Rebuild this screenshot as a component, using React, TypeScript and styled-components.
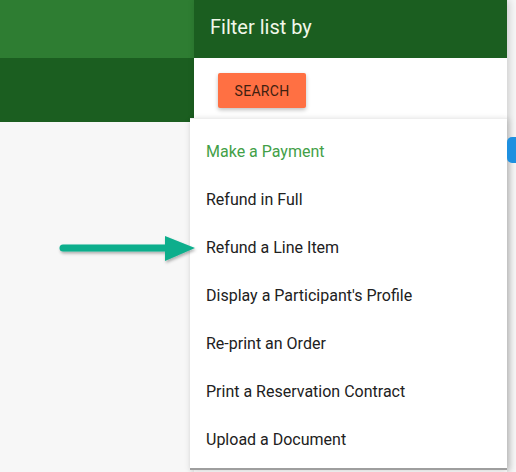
import React from 'react';
import styled, { createGlobalStyle } from 'styled-components';

const GlobalStyle = createGlobalStyle`
  html, body {
    margin: 0;
    padding: 0;
    background: #f7f7f7;
    font-family: Roboto, "Liberation Sans", sans-serif;
  }
`;

const Page = styled.div`
  position: relative;
  width: 516px;
  height: 472px;
  overflow: hidden;
  display: grid;
  grid-template-columns: 194px 313px 9px;
  background: #f7f7f7;
`;

const LeftColumn = styled.div`
  display: flex;
  flex-direction: column;
`;

const Band = styled.div<{ $h: number; $bg: string }>`
  height: ${(p) => p.$h}px;
  background: ${(p) => p.$bg};
`;

const Drawer = styled.div`
  display: flex;
  flex-direction: column;
  background: #fff;
  box-shadow: 2px 0 8px rgba(0, 0, 0, 0.18);
  z-index: 1;
`;

const DrawerHeader = styled.div`
  height: 58px;
  background: #1b5e20;
  display: flex;
  align-items: center;
  padding: 0 16px 4px;
  color: #f1f8e9;
  font-size: 20px;
  box-sizing: border-box;
`;

const Actions = styled.div`
  padding: 15px 24px;
`;

const SearchButton = styled.button`
  width: 88px;
  height: 35px;
  border: none;
  border-radius: 2px;
  background: #ff7043;
  color: #3e2010;
  font-family: Roboto, "Liberation Sans", sans-serif;
  font-size: 14px;
  font-weight: 400;
  letter-spacing: 0.3px;
  box-shadow: 0 2px 4px rgba(0, 0, 0, 0.25);
  cursor: pointer;
`;

const Menu = styled.ul`
  position: absolute;
  left: 190px;
  top: 118px;
  width: 317px;
  height: 352px;
  margin: 0;
  padding: 8px 0 0;
  list-style: none;
  background: #fff;
  border-top: 1px solid #eeeeee;
  border-bottom: 2px solid #9e9e9e;
  box-sizing: border-box;
  box-shadow: 0 2px 6px rgba(0, 0, 0, 0.12), 4px 0 6px rgba(0, 0, 0, 0.06);
  z-index: 2;
`;

const MenuItem = styled.li<{ $active?: boolean }>`
  height: 48px;
  display: flex;
  align-items: center;
  padding: 0 16px;
  font-size: 16px;
  color: ${(p) => (p.$active ? '#43a047' : '#212121')};
`;

const BlueTab = styled.div`
  position: absolute;
  left: 507px;
  top: 137px;
  width: 20px;
  height: 26px;
  border-radius: 5px;
  background: #1e90e0;
  z-index: 3;
`;

const Arrow = styled.svg`
  position: absolute;
  left: 56px;
  top: 232px;
  z-index: 3;
  overflow: visible;
`;

const items = [
  'Make a Payment',
  'Refund in Full',
  'Refund a Line Item',
  "Display a Participant's Profile",
  'Re-print an Order',
  'Print a Reservation Contract',
  'Upload a Document',
];

export default function App() {
  return (
    <>
      <GlobalStyle />
      <Page>
        <LeftColumn>
          <Band $h={58} $bg="#2e7d32" />
          <Band $h={64} $bg="#1b5e20" />
        </LeftColumn>
        <Drawer>
          <DrawerHeader>Filter list by</DrawerHeader>
          <Actions>
            <SearchButton>SEARCH</SearchButton>
          </Actions>
        </Drawer>
        <div />
        <Menu>
          {items.map((item, i) => (
            <MenuItem key={item} $active={i === 0}>
              {item}
            </MenuItem>
          ))}
        </Menu>
        <BlueTab />
        <Arrow width="140" height="34" viewBox="0 0 140 34">
          <defs>
            <filter id="arrowShadow" x="-10%" y="-30%" width="120%" height="180%">
              <feDropShadow dx="1" dy="2" stdDeviation="1.5" floodColor="#000" floodOpacity="0.3" />
            </filter>
          </defs>
          <g filter="url(#arrowShadow)">
            <line x1="7" y1="16" x2="112" y2="16" stroke="#0bae8c" strokeWidth="7" strokeLinecap="round" />
            <polygon points="109,4 139,16 109,29" fill="#0bae8c" />
          </g>
        </Arrow>
      </Page>
    </>
  );
}
